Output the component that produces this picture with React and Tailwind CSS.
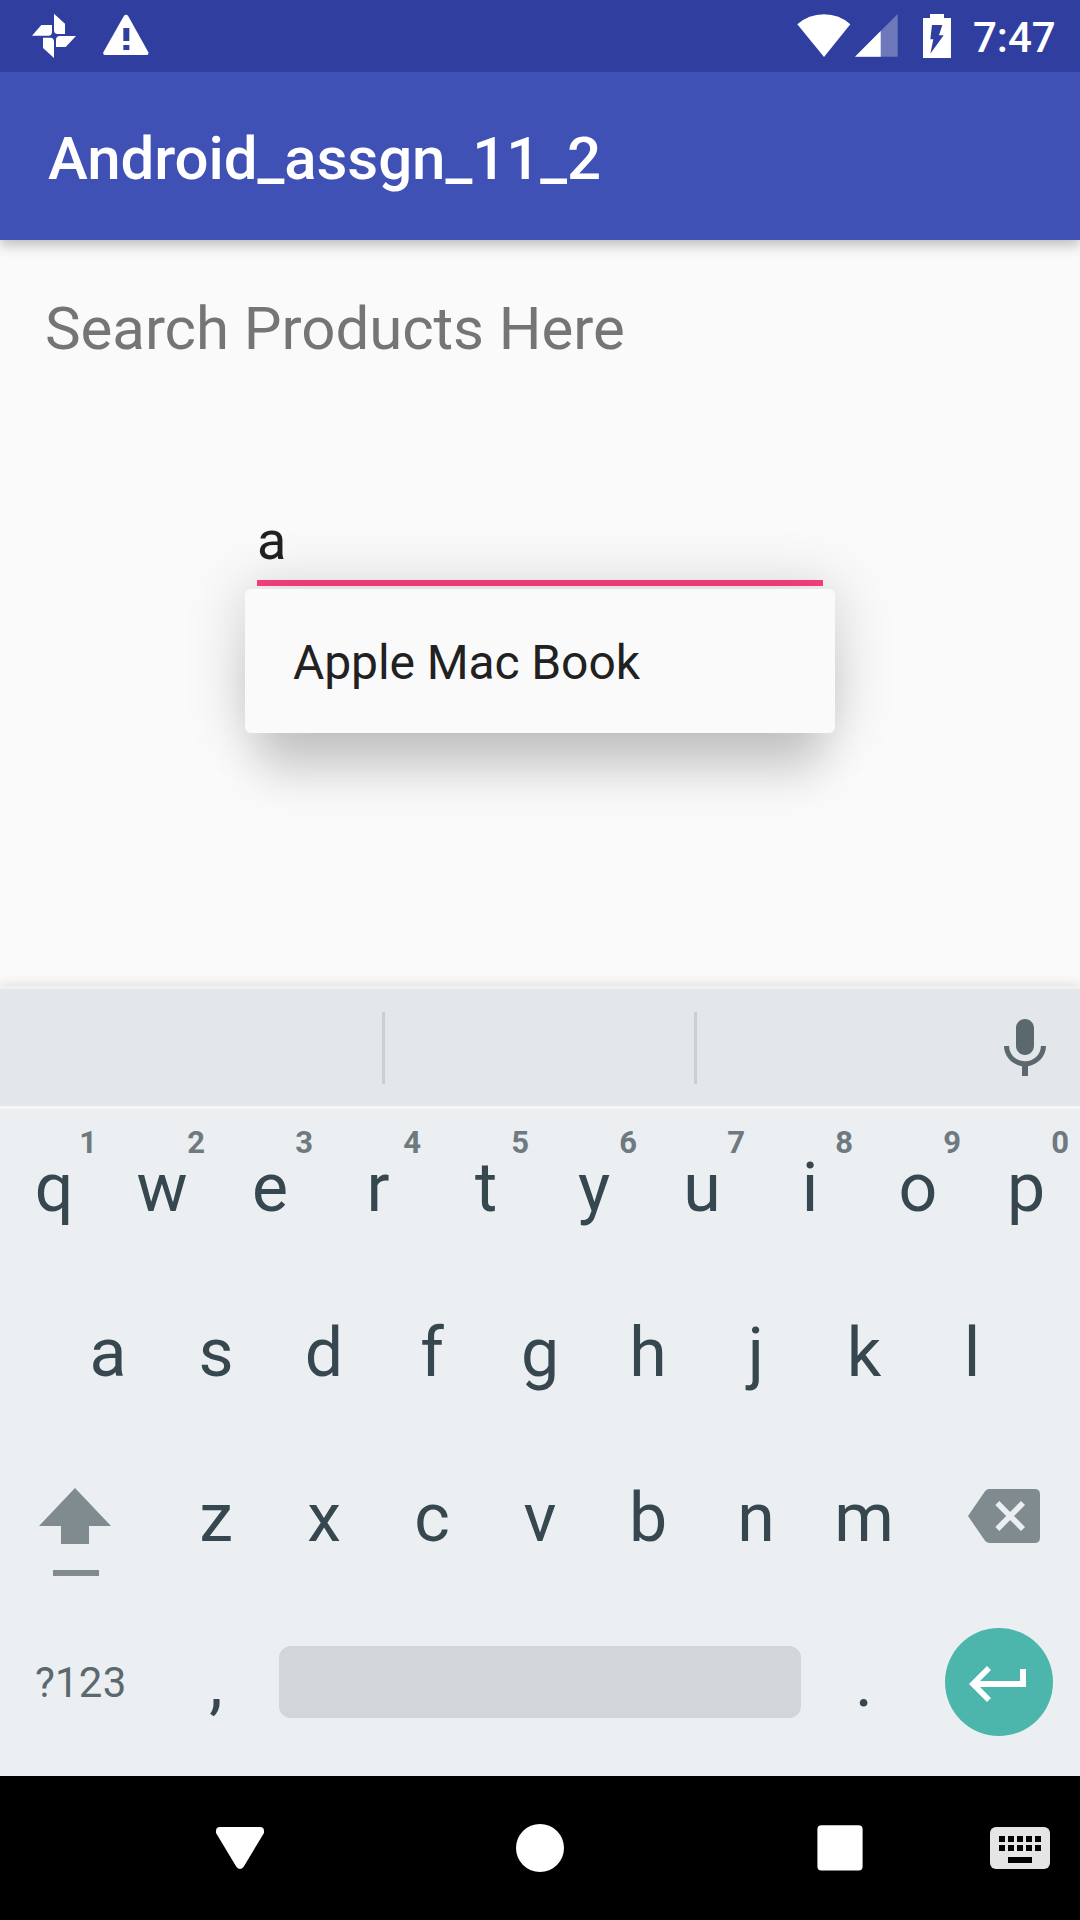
const Pinwheel = () => (
  <svg className="h-[46px] w-[46px] fill-white" viewBox="93 39 138 138">
    <path d="M162 41l33 30v31h-22q-11 0-11-12zM228 108l-31 33h-29v-21q0-12 12-12zM162 174l-33-30v-31h21q12 0 12 12zM96 107l28-32h32v21q0 11-11 11z" />
  </svg>
);

const Warning = () => (
  <svg className="h-[42px] w-[46px]" viewBox="308 42 138 126">
    <path className="fill-white" d="M371 47q6-6 12 0l61 110v5q-1 3-5 3H314q-4 0-5-3v-5z" />
    <path className="fill-[#303f9f]" d="M369 84h18v39h-18zM369 135h18v15h-18z" />
  </svg>
);

const Wifi = () => (
  <svg className="h-[43px] w-[54px] fill-white" viewBox="50 41 162 129">
    <path d="M131 170L51 72Q85 42 131 42T210 72z" />
  </svg>
);

const Signal = () => (
  <svg className="h-[43px] w-[43px] fill-white" viewBox="226 43 129 129">
    <path opacity="0.3" d="M354 43v128H226z" />
    <path d="M303 94v77h-77z" />
  </svg>
);

const Battery = () => (
  <svg className="h-[44px] w-[28px]" viewBox="429 42 84 132">
    <path className="fill-white" d="M450 42h42v12h21v120h-84V54h21z" />
    <path className="fill-[#303f9f]" d="M456 75h31l-10 31h14l-40 55 9-43h-9z" />
  </svg>
);

const Mic = () => (
  <svg className="h-[72px] w-[72px] fill-[#5b696f]" viewBox="0 0 24 24">
    <path d="M12 14c1.66 0 2.99-1.34 2.99-3L15 5c0-1.66-1.34-3-3-3S9 3.34 9 5v6c0 1.66 1.34 3 3 3zm5.3-3c0 3-2.54 5.1-5.3 5.1S6.7 14 6.7 11H5c0 3.41 2.72 6.23 6 6.72V21h2v-3.28c3.28-.48 6-3.3 6-6.72h-1.7z" />
  </svg>
);

const Shift = () => (
  <svg className="h-[88px] w-[72px] fill-[#808b8f]" viewBox="117 144 216 264">
    <path d="M225 144L333 258H267v54h-84v-54h-66zM159 390h138v18H159z" />
  </svg>
);

const Backspace = () => (
  <svg className="h-[54px] w-[72px]" viewBox="564 147 216 162">
    <path className="fill-[#808b8f]" d="M627 147H764q16 0 16 16V293q0 16-16 16H627q-8 0-13-8L564 228l50-73q5-8 13-8z" />
    <path stroke="#ebeff2" strokeWidth="17" d="M652 189l77 78M729 189l-77 78" />
  </svg>
);

const Enter = () => (
  <svg className="h-[36px] w-[57px] fill-white" viewBox="567 678 171 108">
    <path d="M567 732l54-54 12 12-33 33H720V687h18v54H600l33 33-12 12z" />
  </svg>
);

const KeyboardIcon = () => (
  <svg className="h-[42px] w-[60px]" viewBox="0 0 60 42">
    <rect width="60" height="42" rx="6" fill="#e5e5e5" />
    <path d="M9 9h6v6H9zM18 9h6v6h-6zM27 9h6v6h-6zM36 9h6v6h-6zM45 9h6v6h-6zM9 18h6v6H9zM18 18h6v6h-6zM27 18h6v6h-6zM36 18h6v6h-6zM45 18h6v6h-6zM18 30h24v6H18z" />
  </svg>
);

const Key = ({ label, hint }) => (
  <div className="relative flex h-[165px] w-[108px] items-center justify-center pb-[2px] text-[68px] leading-[80px] text-[#37474f]">
    {label}
    {hint && (
      <span className="absolute top-[19px] right-[11px] text-[31px] leading-[36px] font-bold text-[#6e7a80]">
        {hint}
      </span>
    )}
  </div>
);

export default function App() {
  return (
    <div className="flex h-[1920px] w-[1080px] flex-col overflow-hidden bg-[#fafafa] font-['Roboto',sans-serif]">
      <header className="shadow-[0_5px_12px_rgba(0,0,0,0.25)]">
        <div className="flex h-[72px] items-center bg-[#303f9f] pl-[31px]">
          <Pinwheel />
          <div className="ml-[26px] mb-[2px]"><Warning /></div>
          <div className="ml-[648px] flex items-center">
            <div className="mb-px"><Wifi /></div>
            <div className="mb-px ml-[4px]"><Signal /></div>
            <div className="ml-[25px]"><Battery /></div>
            <span className="ml-[22px] pt-[3px] text-[42px] leading-[50px] font-medium text-white">7:47</span>
          </div>
        </div>
        <div className="flex h-[168px] items-center bg-[#3f51b5] pt-[6px] pl-[48px]">
          <h1 className="text-[60px] leading-[70px] font-medium tracking-[-0.08px] text-white">Android_assgn_11_2</h1>
        </div>
      </header>

      <main className="flex h-[746px] flex-col pt-[54px]">
        <p className="pl-[45px] text-[60px] leading-[70px] tracking-[-0.06px] text-[#757575]">Search Products Here</p>
        <div className="mt-[145px] ml-[257px] h-[77px] w-[566px] border-b-[6px] border-[#ff4081] text-[54px] leading-[64px] text-[#212121]">
          a
        </div>
        <div className="relative mt-[3px] ml-[245px] flex h-[144px] w-[590px] items-center rounded-[6px] bg-[#fafafa] pl-[48px] pt-[4px] text-[48px] leading-[56px] tracking-[-0.1px] text-[#212121] shadow-[0_0_60px_rgba(0,0,0,0.19),0_56px_46px_-14px_rgba(0,0,0,0.14)]">
          Apple Mac Book
        </div>
      </main>

      <section className="h-[790px] bg-[#ebeff2] shadow-[0_0_12px_rgba(0,0,0,0.15)]">
        <div className="flex h-[120px] items-start border-t-[3px] border-[#eef0f1] bg-[#e3e7ea]">
          <div className="mt-[23px] ml-[382px] h-[72px] w-[3px] bg-[#cacfd2]" />
          <div className="mt-[23px] ml-[309px] h-[72px] w-[3px] bg-[#cacfd2]" />
          <div className="mt-[24px] ml-[292px]"><Mic /></div>
        </div>
        <div className="h-[3px] bg-[#f5f7f9]" />
        <div className="-mt-[3px] flex">
          {[..."qwertyuiop"].map((k, i) => <Key key={k} label={k} hint={String((i + 1) % 10)} />)}
        </div>
        <div className="flex pl-[54px]">
          {[..."asdfghjkl"].map((k) => <Key key={k} label={k} />)}
        </div>
        <div className="flex">
          <div className="w-[162px] pt-[52px] pl-[39px]"><Shift /></div>
          {[..."zxcvbnm"].map((k) => <Key key={k} label={k} />)}
          <div className="pt-[53px] pl-[50px]"><Backspace /></div>
        </div>
        <div className="flex items-center">
          <div className="mb-[2px] w-[162px] pl-[35px] text-[42px] leading-[50px] tracking-[0.2px] text-[#5b696f]">?123</div>
          <Key label="," />
          <div className="mx-[9px] mb-[3px] h-[72px] w-[522px] rounded-[12px] bg-[#d1d6d9]" />
          <Key label="." />
          <div className="mb-[3px] ml-[27px] flex h-[108px] w-[108px] items-center justify-center rounded-full bg-[#4db6ac] pt-[4px] pr-[3px]">
            <Enter />
          </div>
        </div>
      </section>

      <nav className="flex h-[144px] items-center bg-black">
        <svg className="ml-[216px] h-[42px] w-[48px] fill-white" viewBox="0 0 48 42">
          <path d="M4 0H44Q48 0 48 4V6L27.500 40Q24 44 20.500 40L0 6V4Q0 0 4 0z" />
        </svg>
        <div className="ml-[252px] h-[48px] w-[48px] rounded-full bg-white" />
        <svg className="ml-[253px] h-[46px] w-[46px] fill-white" viewBox="0 0 46 46">
          <rect x="0.4" y="0.3" width="45.200" height="45.200" rx="4" />
        </svg>
        <div className="ml-[127px]"><KeyboardIcon /></div>
      </nav>
    </div>
  );
}
